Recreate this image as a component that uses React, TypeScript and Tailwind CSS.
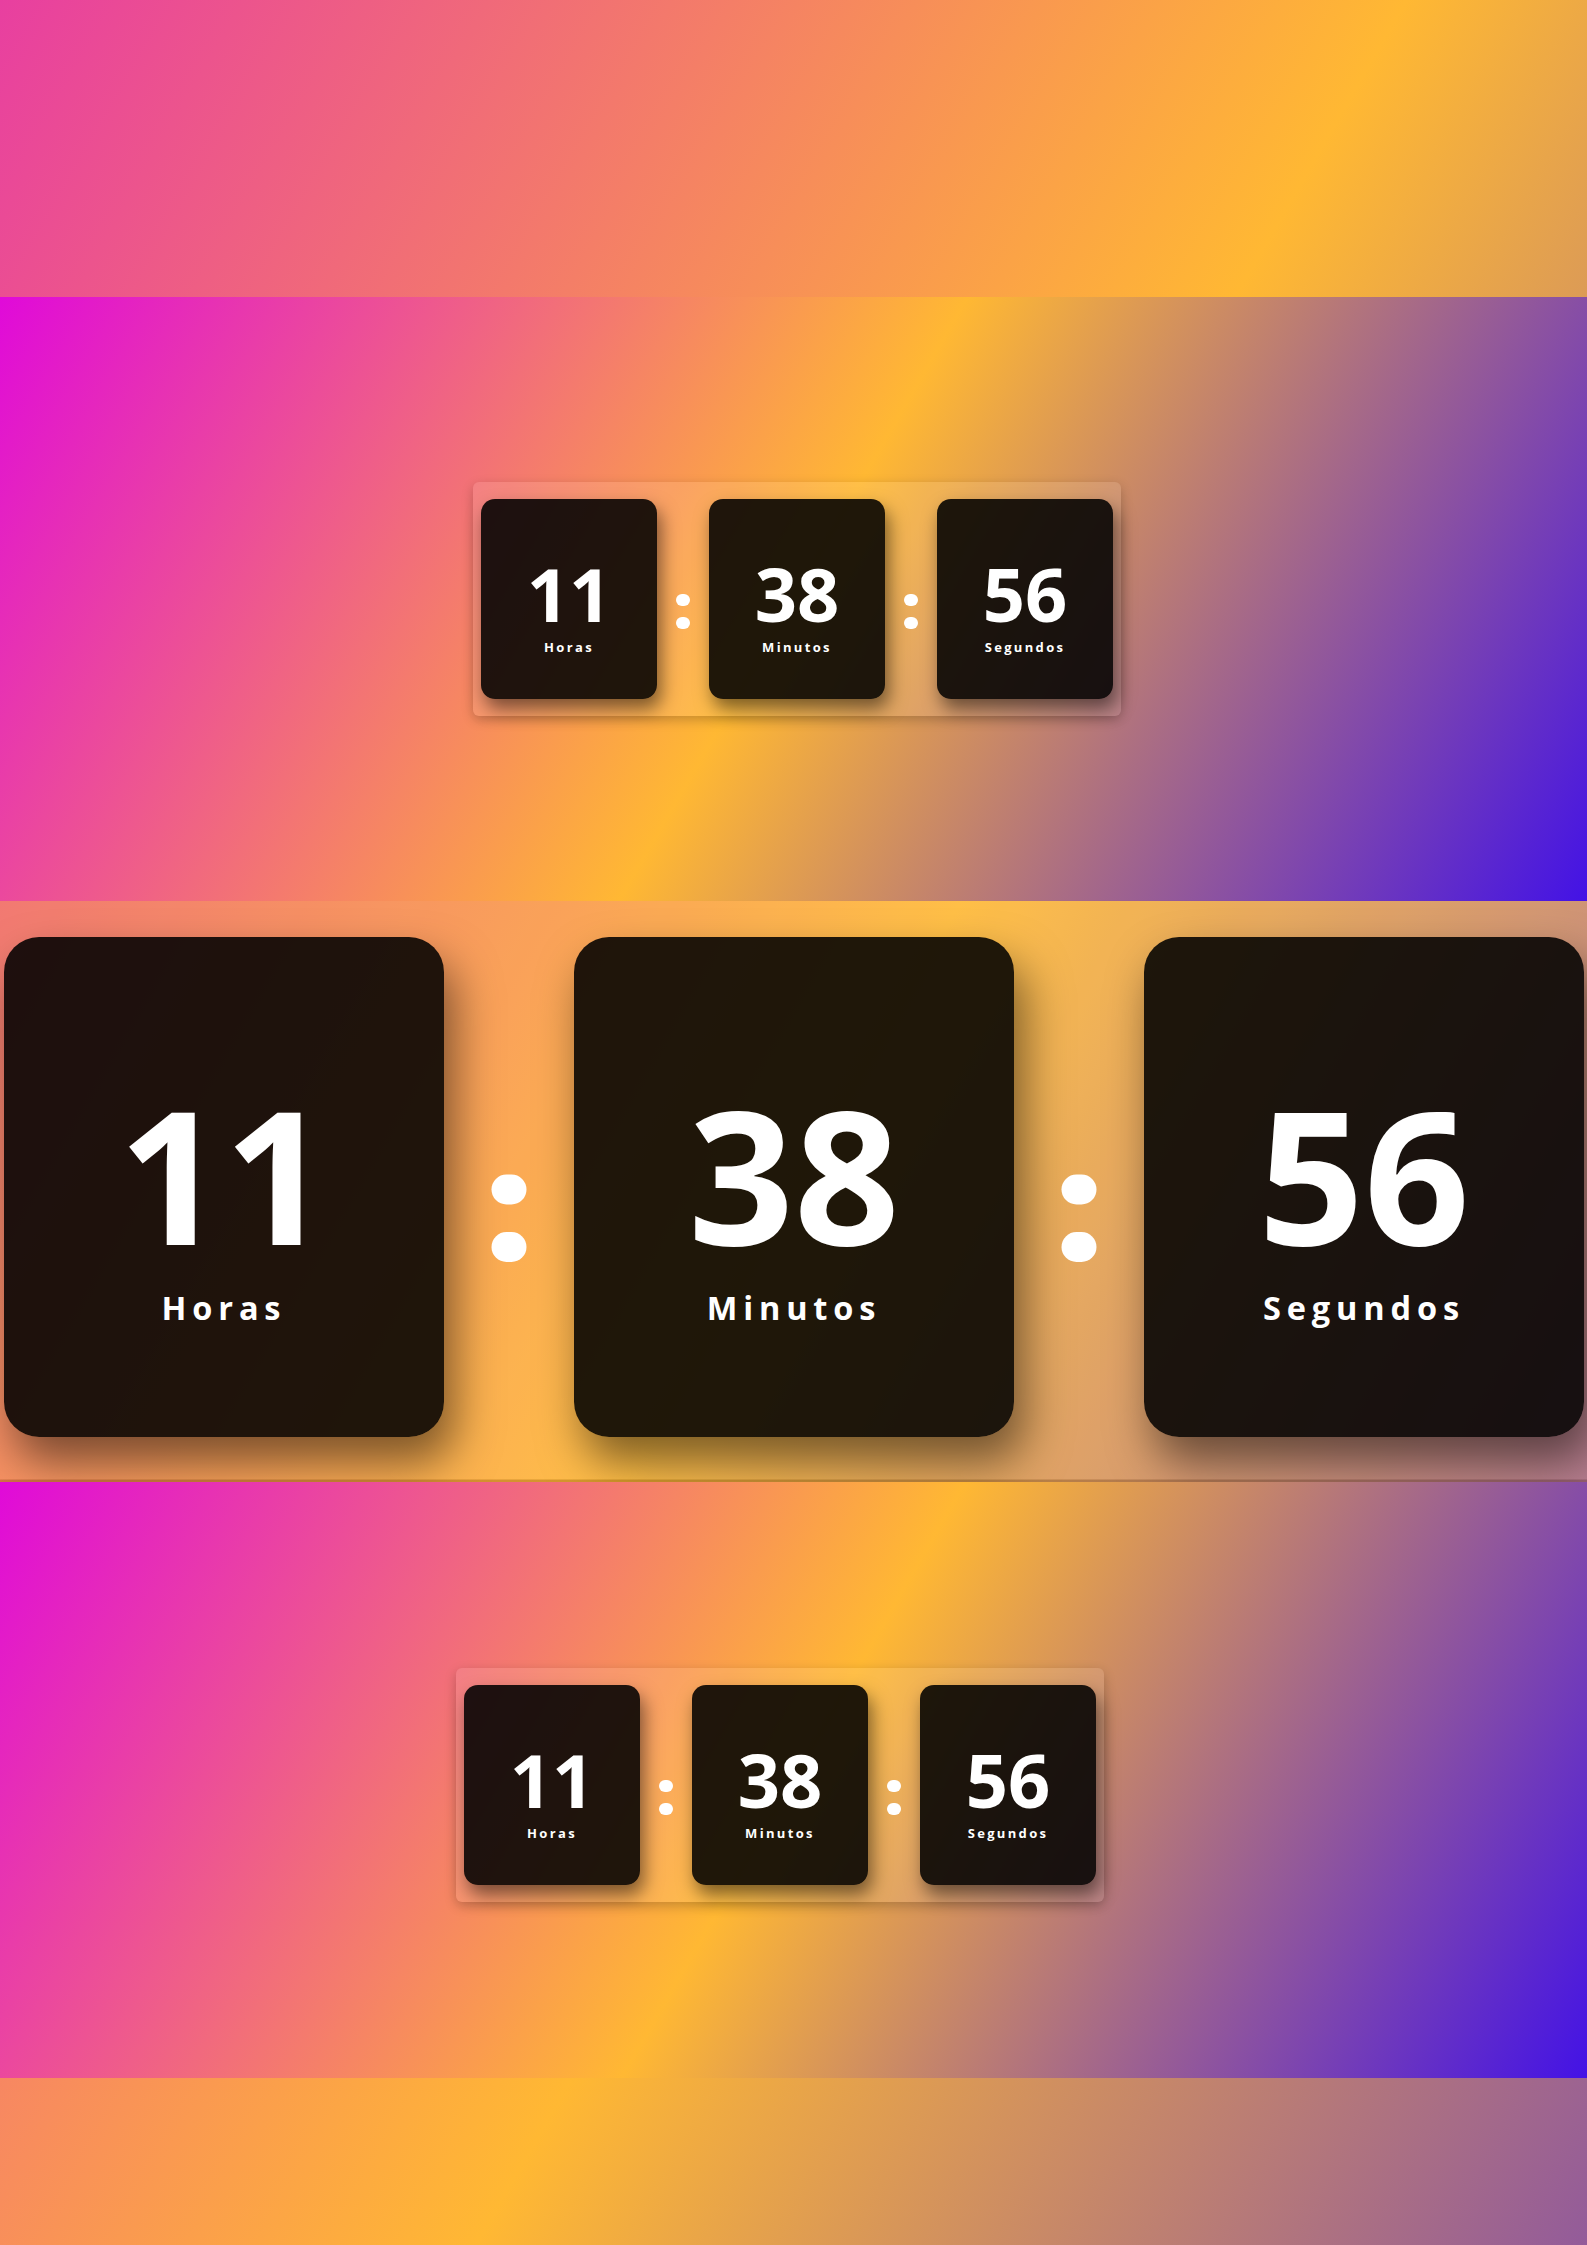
const UNITS = [
  { value: "11", label: "Horas" },
  { value: "38", label: "Minutos" },
  { value: "56", label: "Segundos" },
]

function TimeCard({ value, label }: { value: string; label: string }) {
  return (
    <div className="w-[176px] h-[200px] shrink-0 rounded-[14px] bg-black/[0.88] shadow-[4px_10px_18px_rgba(0,0,0,0.5)] flex flex-col items-center justify-center pt-3">
      <span className="text-[74px] leading-none font-bold text-white">{value}</span>
      <span className="mt-[10px] text-[13px] leading-none font-bold text-white tracking-[0.18em]">{label}</span>
    </div>
  )
}

// the separator dots are rounder and fatter than any installed font's colon
function Colon() {
  return (
    <div aria-label=":" className="w-[52px] shrink-0 mt-[25px] flex flex-col items-center gap-[11px]">
      <span className="w-[14px] h-[12px] rounded-full bg-white" />
      <span className="w-[14px] h-[12px] rounded-full bg-white" />
    </div>
  )
}

function Clock({ className = "" }: { className?: string }) {
  return (
    <div
      className={`flex items-center shrink-0 px-2 py-[17px] rounded-md bg-white/10 shadow-[0_4px_12px_rgba(0,0,0,0.22)] ${className}`}
    >
      {UNITS.map((u, i) => (
        <div key={u.label} className="flex items-center">
          {i > 0 && <Colon />}
          <TimeCard value={u.value} label={u.label} />
        </div>
      ))}
    </div>
  )
}

export default function App() {
  return (
    <div className="w-full font-['Open_Sans',sans-serif]">
      <div className="h-[297px] bg-[linear-gradient(120deg,#e83fa0_0%,#ffb833_80%,#dc9b56_100%)]" />

      <section className="h-[604px] flex items-center justify-center pl-[7px] bg-[linear-gradient(120deg,#e00ad9_0%,#ffb833_50%,#4312e6_100%)]">
        <Clock />
      </section>

      <section className="h-[581px] overflow-hidden flex items-center justify-center pb-[10px] bg-[linear-gradient(120deg,#f06a62_0%,#ffb833_50%,#ae6f82_100%)]">
        <Clock className="scale-[2.5]" />
      </section>

      <section className="h-[596px] flex items-center justify-center pr-[27px] pt-[10px] bg-[linear-gradient(120deg,#e00ad9_0%,#ffb833_50%,#4312e6_100%)]">
        <Clock />
      </section>

      <div className="h-[167px] bg-[linear-gradient(120deg,#f78762_0%,#ffb833_34%,#935b9a_100%)]" />
    </div>
  )
}
